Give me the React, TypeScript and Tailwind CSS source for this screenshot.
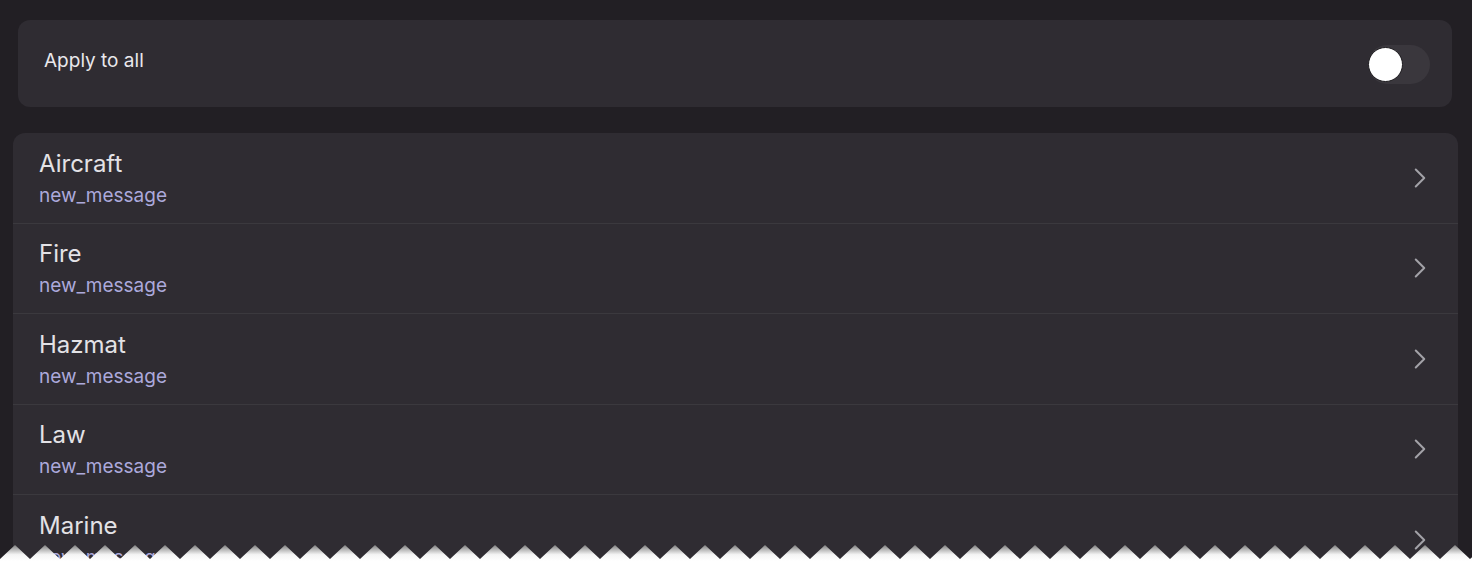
import { ChevronRight } from "lucide-react"

const categories = ["Aircraft", "Fire", "Hazmat", "Law", "Marine", "Medical"]

function Toggle() {
  return (
    <div className="relative h-[39px] w-[62px] rounded-full bg-[#3a373d]">
      <div className="absolute left-[0px] top-[2px] h-[35px] w-[35px] rounded-full border border-[#1c1a1e] bg-white" />
    </div>
  )
}

function TornEdge() {
  const teeth = []
  for (let x = 0; x <= 1500; x += 30) {
    teeth.push(`${x},14 ${x + 15},0`)
  }
  const points = `0,16 ${teeth.join(" ")} 1500,16`
  return (
    <svg
      className="pointer-events-none absolute bottom-0 left-0"
      width="1472"
      height="16"
      viewBox="0 0 1472 16"
    >
      <defs>
        <linearGradient id="torn" x1="0" y1="0" x2="0" y2="1">
          <stop offset="0" stopColor="#7f7f7f" />
          <stop offset="0.6" stopColor="#f4f4f4" />
          <stop offset="1" stopColor="#ffffff" />
        </linearGradient>
      </defs>
      <polygon points={points} fill="url(#torn)" />
    </svg>
  )
}

export default function App() {
  return (
    <div
      className="relative h-[561px] w-full overflow-hidden bg-[#221f24] pt-[20px]"
      style={{ fontFamily: "Inter, 'Noto Sans', sans-serif" }}
    >
      <div className="ml-[18px] mr-[20px] flex h-[87px] items-start justify-between rounded-[12px] bg-[#2f2c32] pl-[26px] pr-[22px]">
        <span className="mt-[29px] text-[19px] leading-[24px] text-[#e9e8ec]">Apply to all</span>
        <div className="mt-[25px]">
          <Toggle />
        </div>
      </div>

      <div className="ml-[13px] mr-[14px] mt-[26px] overflow-hidden rounded-[12px] bg-[#2f2c32]">
        {categories.map((name) => (
          <div
            key={name}
            className="flex h-[90.5px] items-center justify-between border-b border-[#3b393e] pl-[26px] pr-[21px]"
          >
            <div className="flex flex-col pt-[6px]">
              <span className="text-[24px] leading-[30px] text-[#e3e2e6]">{name}</span>
              <span className="text-[19px] leading-[34px] text-[#aca9dc]">new_message</span>
            </div>
            <ChevronRight className="h-[34px] w-[34px] text-[#a3a2a8]" strokeWidth={1.4} />
          </div>
        ))}
      </div>

      <TornEdge />
    </div>
  )
}
